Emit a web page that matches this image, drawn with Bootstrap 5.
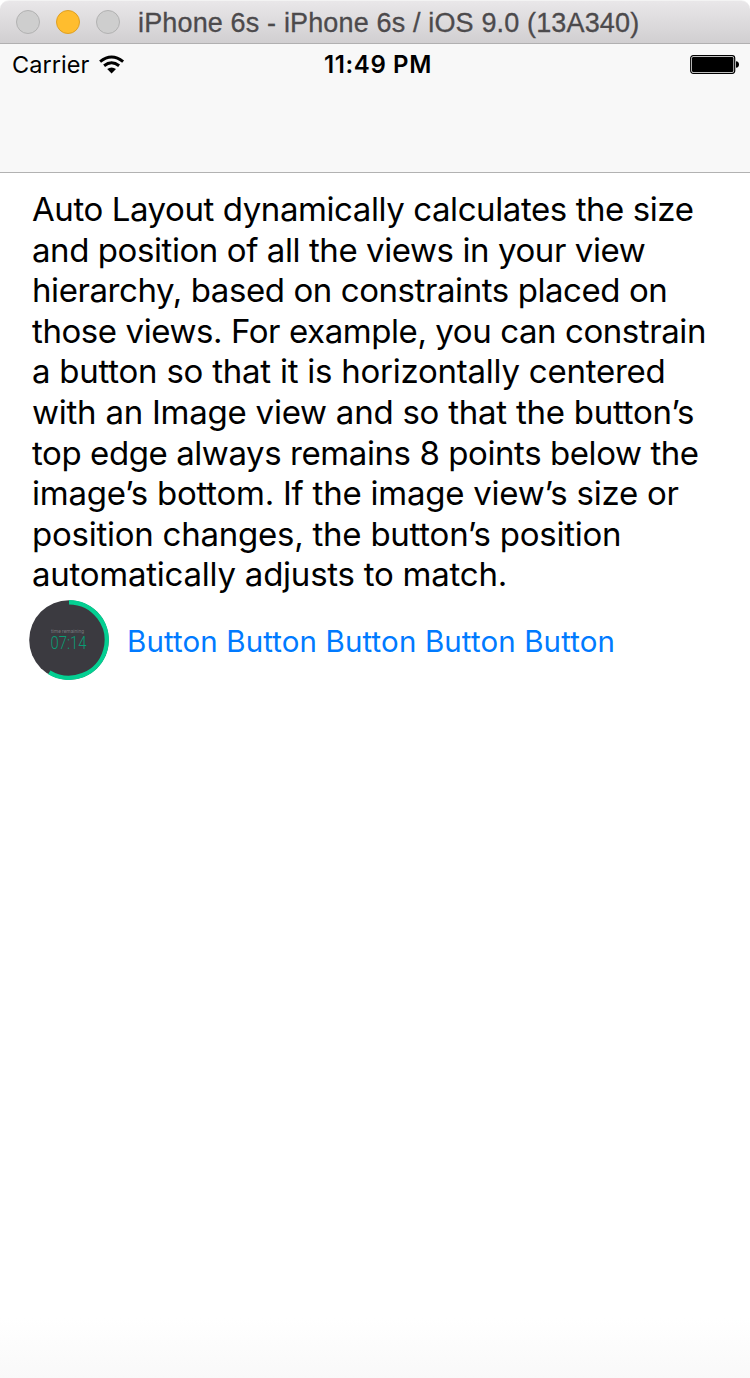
<!DOCTYPE html>
<html lang="en">
<head>
<meta charset="utf-8">
<meta name="viewport" content="width=device-width, initial-scale=1">
<title>iPhone 6s</title>
<link href="https://cdn.jsdelivr.net/npm/bootstrap@5.3.0/dist/css/bootstrap.min.css" rel="stylesheet">
<style>
body { font-family: Inter, sans-serif; background: #fff; color: #000; }
.simulator { height: 1378px; overflow: hidden; background: linear-gradient(#fff 1318px, #f9f9f9 1378px); }
.titlebar { height: 44px; padding-left: 16px; background: linear-gradient(#e9e7e9, #d1cfd1); border-bottom: 1px solid #b1b0b1; border-top: 1px solid #f3f3f3; border-radius: 9px 9px 0 0; }
.light { width: 24px; height: 24px; border: 1px solid #b2b2b2; background: #cecece; }
.light-amber { background: #ffbd2e; border-color: #dfa023; }
.window-title { font: 27px/30px "Liberation Sans", sans-serif; color: #4c4a4c; margin-left: 18px; padding-top: 2px; white-space: nowrap; letter-spacing: .15px; -webkit-text-stroke: .3px #4c4a4c; }
.nav-area { height: 129px; background: #f8f8f8; border-bottom: 1px solid #b2b2b2; }
.statusbar { height: 42px; padding: 0 11px 0 12px; }
.carrier { font-size: 23.5px; letter-spacing: .05px; }
.clock { font-size: 24px; font-weight: 600; letter-spacing: .62px; padding-left: 5px; }
.copy { padding: 16px 0 0 32px; font-size: 33px; line-height: 40.6px; letter-spacing: -.42px; }
.copy span { display: block; white-space: nowrap; }
.copy .airy { letter-spacing: -.24px; }
.actions { padding-left: 29px; margin-top: 5.5px; }
.ios-button { color: #007aff; font-size: 29.5px; line-height: 36px; margin-left: 18px; border: 0; padding: 2px 0 0; background: none; white-space: nowrap; letter-spacing: .12px; }
</style>
</head>
<body>
<main class="simulator">
  <header class="titlebar d-flex align-items-center">
    <div class="d-flex gap-3">
      <span class="light rounded-circle"></span>
      <span class="light light-amber rounded-circle"></span>
      <span class="light rounded-circle"></span>
    </div>
    <div class="window-title">iPhone 6s - iPhone 6s / iOS 9.0 (13A340)</div>
  </header>
  <nav class="nav-area">
    <div class="statusbar row g-0 align-items-center">
      <div class="col d-flex align-items-center">
        <span class="carrier">Carrier</span>
        <svg class="ms-2" width="28" height="20" viewBox="-1.6 0 28 20" aria-label="Wi-Fi">
          <path d="M1.5 6.6Q13-2.6 24.5 6.6M5.5 10.7Q13 4.8 20.5 10.7" fill="none" stroke="#000" stroke-width="3"/>
          <path d="M8.6 14.1Q13 10.8 17.4 14.1L13 18.5Z"/>
        </svg>
      </div>
      <div class="col-auto clock">11:49 PM</div>
      <div class="col d-flex justify-content-end">
        <svg width="49" height="20" viewBox="0 0 49 20" aria-label="Battery">
          <rect x=".7" y=".7" width="44" height="17.6" rx="2.5" fill="#fff" stroke="#000" stroke-width="1.2"/>
          <rect x="2" y="2" width="41.4" height="15" rx="1.3"/>
          <path d="M46 6.2Q49 6.5 49 9.5T46 12.8Z"/>
        </svg>
      </div>
    </div>
  </nav>
  <p class="copy mb-0">
    <span>Auto Layout dynamically calculates the size</span>
    <span>and position of all the views in your view</span>
    <span>hierarchy, based on constraints placed on</span>
    <span>those views. For example, you can constrain</span>
    <span class="airy">a button so that it is horizontally centered</span>
    <span class="airy">with an Image view and so that the button’s</span>
    <span>top edge always remains 8 points below the</span>
    <span class="airy">image’s bottom. If the image view’s size or</span>
    <span class="airy">position changes, the button’s position</span>
    <span class="airy">automatically adjusts to match.</span>
  </p>
  <div class="actions d-flex align-items-center">
    <svg width="80" height="80" viewBox="0 0 80 80">
      <circle cx="40" cy="40" r="39.8" fill="#3b3a40"/>
      <path d="M40 2.2A37.8 37.8 0 1 1 20.3 72.3" fill="none" stroke="#04cf92" stroke-width="4.4"/>
      <text x="22" y="32.5" textLength="33" lengthAdjust="spacingAndGlyphs" font-family="Roboto" font-size="5" fill="#77767b">time remaining</text>
      <text x="21.5" y="48.5" textLength="36" lengthAdjust="spacingAndGlyphs" font-family="Roboto" font-weight="300" font-size="18" fill="#0a9c74">07:14</text>
    </svg>
    <button class="ios-button" type="button">Button Button Button Button Button</button>
  </div>
</main>
<script src="https://cdn.jsdelivr.net/npm/bootstrap@5.3.0/dist/js/bootstrap.bundle.min.js"></script>
</body>
</html>
